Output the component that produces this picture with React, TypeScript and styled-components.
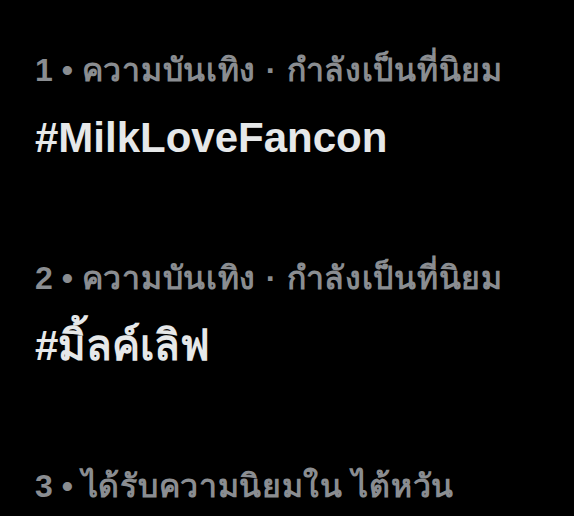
import styled, { createGlobalStyle } from "styled-components";

const Global = createGlobalStyle`
  html, body {
    margin: 0;
    padding: 0;
    background: #000;
  }
`;

const List = styled.div`
  display: flex;
  flex-direction: column;
  padding: 48px 0 0 35px;
  font-family: "Liberation Sans", "Noto Sans", sans-serif;
`;

const Item = styled.div`
  display: flex;
  flex-direction: column;
  padding-bottom: 94px;

  &:last-child {
    padding-bottom: 0;
  }
`;

const Meta = styled.div`
  font-size: 32px;
  line-height: 44px;
  font-weight: 700;
  color: #8a8d91;
  white-space: nowrap;
`;

const Context = styled.span`
  letter-spacing: 0.7px;
`;

const Tag = styled.div`
  margin-top: 22px;
  font-size: 42px;
  line-height: 48px;
  font-weight: 700;
  color: #e6e8e9;
  white-space: nowrap;
`;

const trends = [
  { rank: 1, context: "ความบันเทิง · กำลังเป็นที่นิยม", tag: "#MilkLoveFancon" },
  { rank: 2, context: "ความบันเทิง · กำลังเป็นที่นิยม", tag: "#มิ้ลค์เลิฟ" },
  { rank: 3, context: "ได้รับความนิยมใน ไต้หวัน", tag: "" },
];

export default function App() {
  return (
    <>
      <Global />
      <List>
        {trends.map((t) => (
          <Item key={t.rank}>
            <Meta>
              {t.rank} • <Context>{t.context}</Context>
            </Meta>
            {t.tag ? <Tag>{t.tag}</Tag> : null}
          </Item>
        ))}
      </List>
    </>
  );
}
